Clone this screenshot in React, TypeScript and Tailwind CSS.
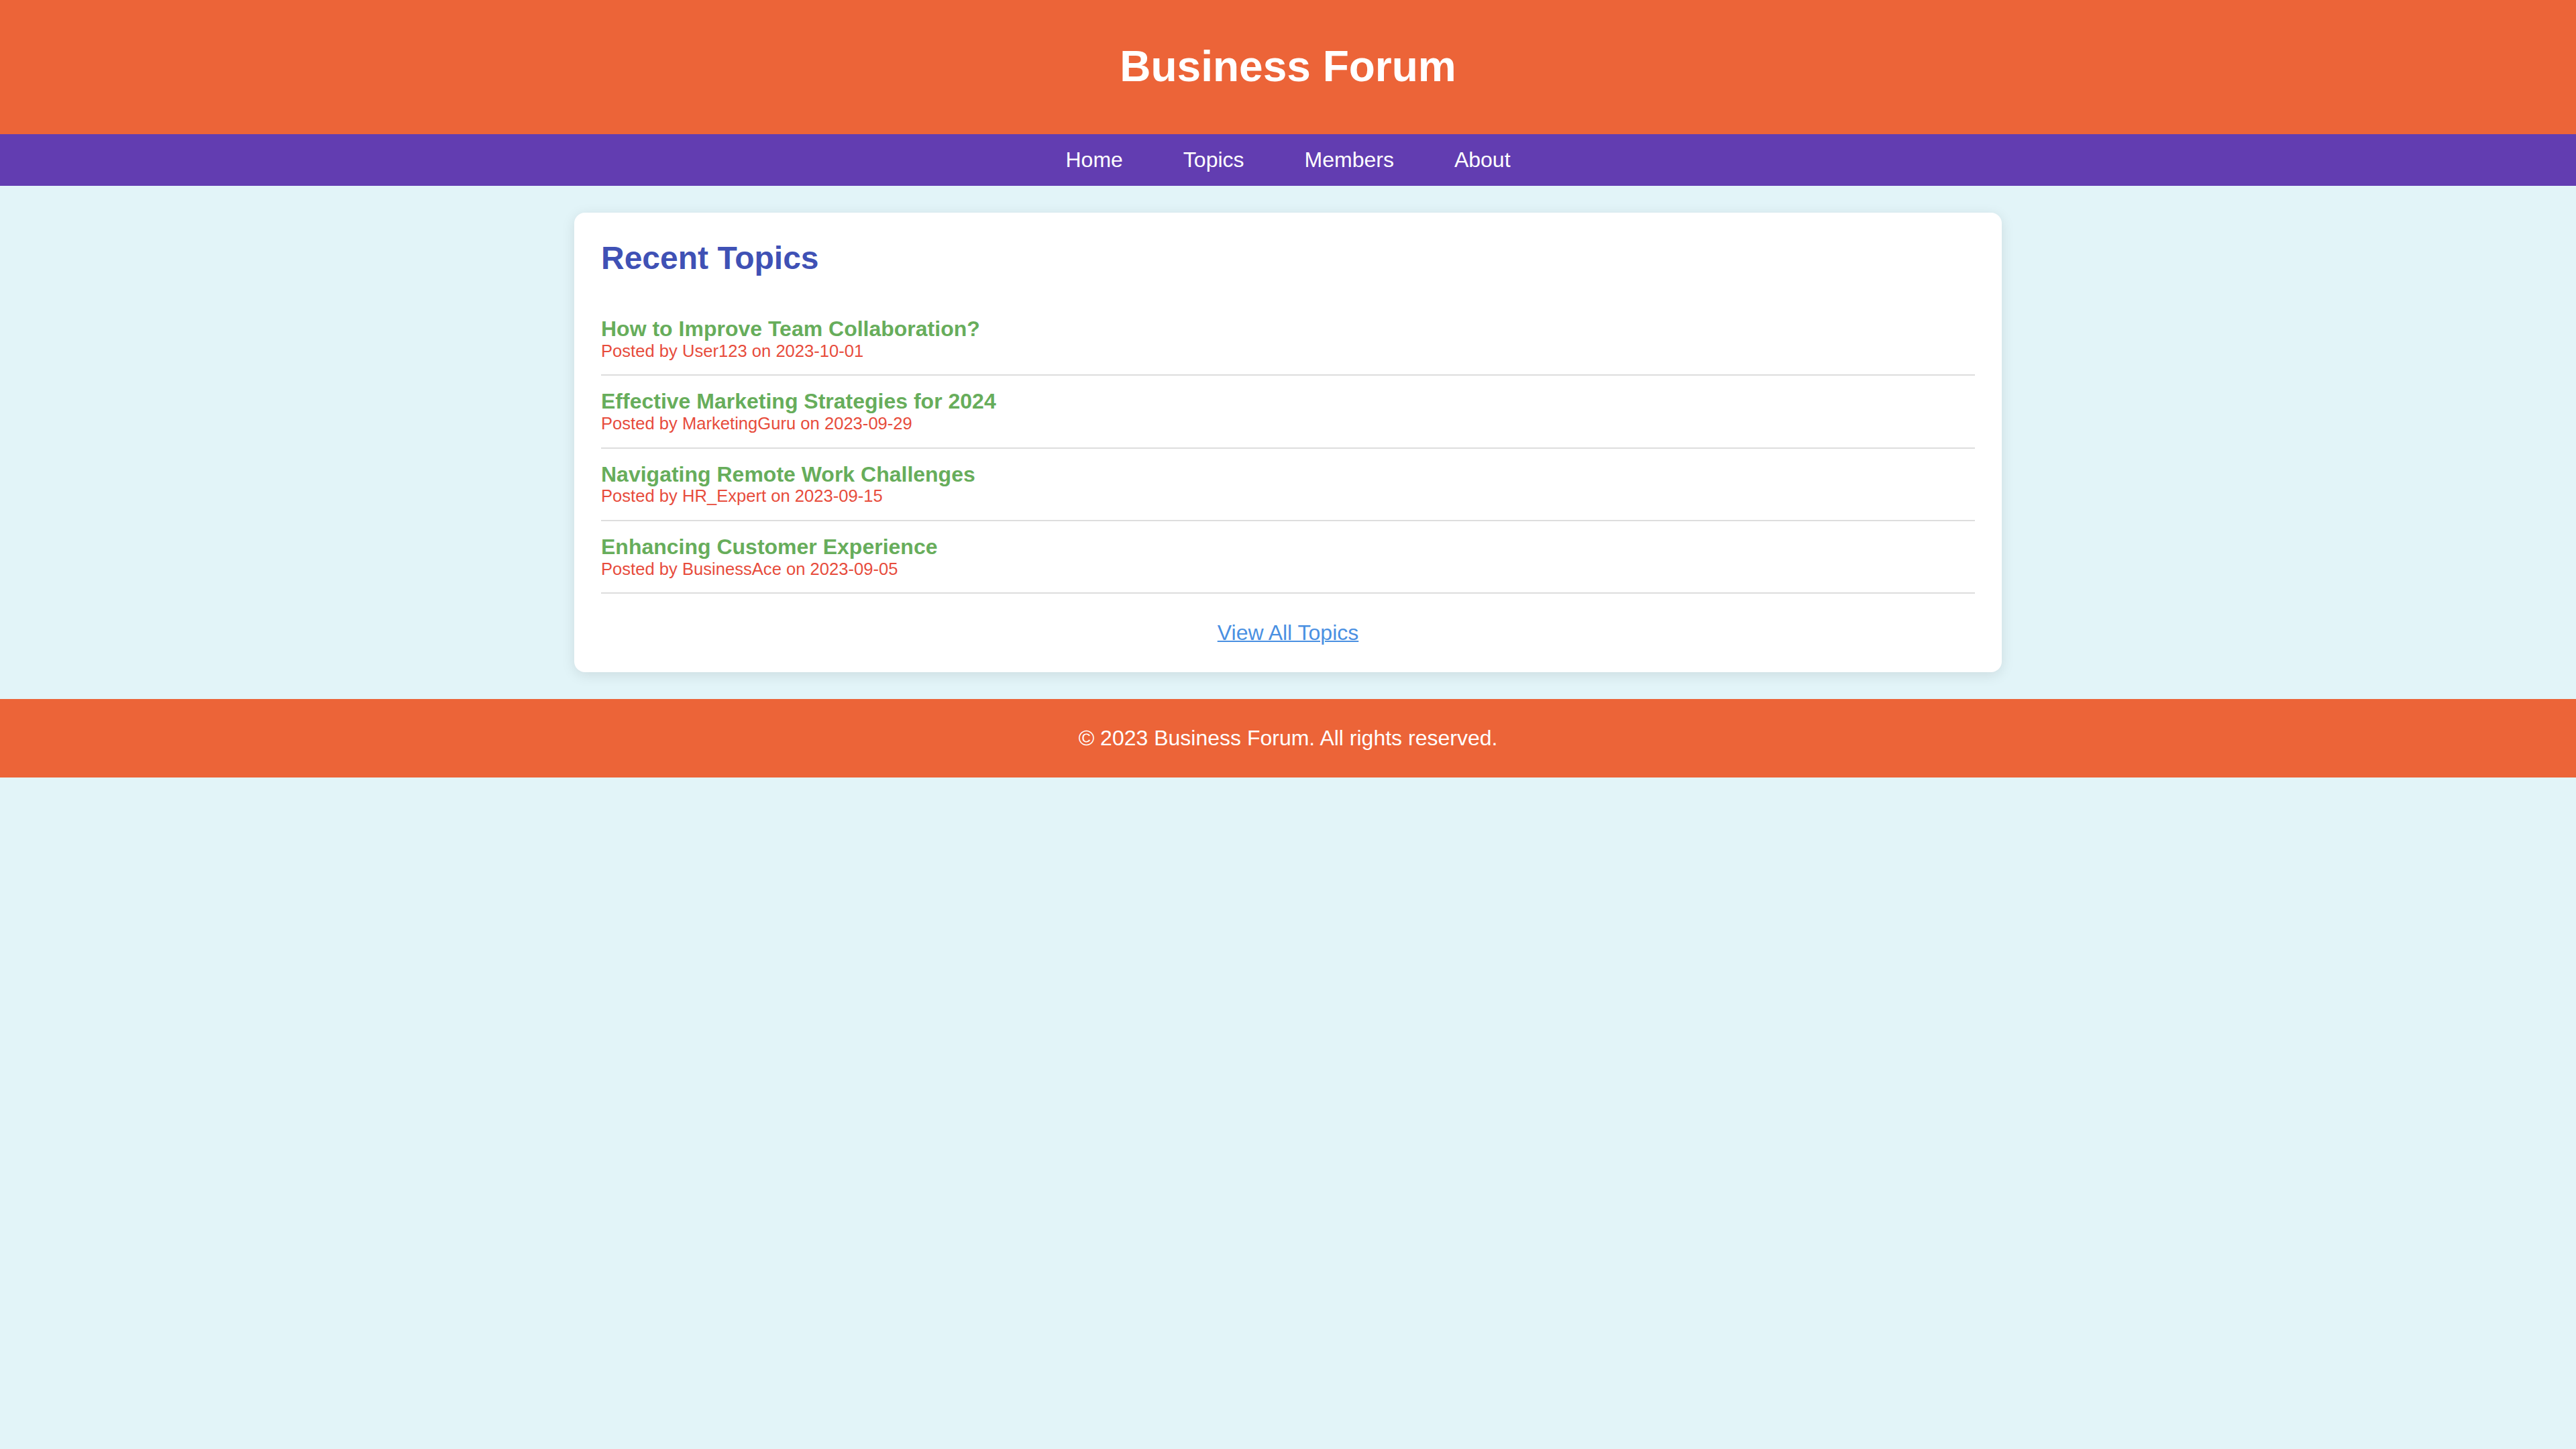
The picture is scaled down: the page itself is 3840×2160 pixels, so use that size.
const topics = [
	{ title: "How to Improve Team Collaboration?", author: "User123", date: "2023-10-01" },
	{ title: "Effective Marketing Strategies for 2024", author: "MarketingGuru", date: "2023-09-29" },
	{ title: "Navigating Remote Work Challenges", author: "HR_Expert", date: "2023-09-15" },
	{ title: "Enhancing Customer Experience", author: "BusinessAce", date: "2023-09-05" },
]

const links = ["Home", "Topics", "Members", "About"]

export default function App() {
	return (
		<div className="min-h-screen bg-[#e2f4f8] font-['Liberation_Sans',Arial,sans-serif] leading-[1.15]">
			<header className="h-[200px] bg-[#ec6438] flex items-center justify-center">
				<h1 className="text-[64px] font-bold text-white">Business Forum</h1>
			</header>
			<nav className="h-[77px] bg-[#623db1] flex items-center justify-center gap-[90px]">
				{links.map((l) => (
					<a key={l} href="#" className="text-[32px] text-white">
						{l}
					</a>
				))}
			</nav>
			<main className="py-[40px] flex justify-center">
				<section className="w-[2128px] bg-white rounded-[16px] shadow-[0_4px_20px_rgba(0,0,0,0.1)] p-[40px]">
					<h2 className="text-[48px] font-bold text-[#3f51b5] mb-[40px]">Recent Topics</h2>
					<ul>
						{topics.map((t) => (
							<li key={t.title} className="py-[20px] border-b-2 border-[#dddddd]">
								<a href="#" className="block text-[32px] font-bold text-[#67ad5b]">
									{t.title}
								</a>
								<p className="text-[25.6px] text-[#e74c3c]">
									Posted by {t.author} on {t.date}
								</p>
							</li>
						))}
					</ul>
					<div className="mt-[40px] text-center">
						<a href="#" className="text-[32px] text-[#4a90e2] underline decoration-2">
							View All Topics
						</a>
					</div>
				</section>
			</main>
			<footer className="bg-[#ec6438] py-[40px] text-center text-[32px] text-white">
				© 2023 Business Forum. All rights reserved.
			</footer>
		</div>
	)
}
